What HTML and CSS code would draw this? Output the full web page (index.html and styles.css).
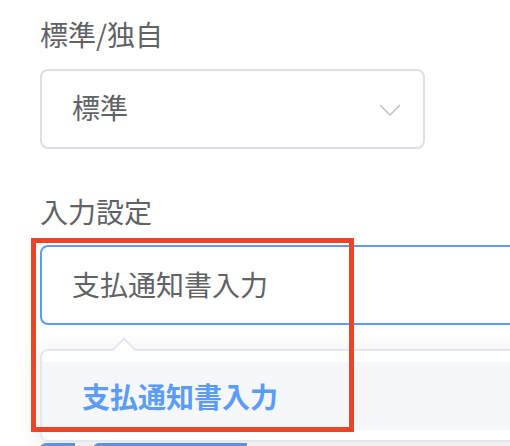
FILE: index.html
```html
<!DOCTYPE html>
<html lang="ja">
<head>
<meta charset="UTF-8">
<title>入力設定</title>
<link rel="stylesheet" href="styles.css">
</head>
<body>
	<div class="form">
		<div class="form-item">
			<label class="form-label">標準/独自</label>
			<div class="select">
				<span class="select-value">標準</span>
				<svg class="select-arrow" width="22" height="12" viewBox="0 0 22 12"><path d="M1 1 L11 11 L21 1" fill="none" stroke="#c0c4cc" stroke-width="1.6"/></svg>
			</div>
		</div>
		<div class="form-item">
			<label class="form-label">入力設定</label>
			<div class="input is-focus">支払通知書入力</div>
		</div>
		<div class="form-item next">
			<span class="btn"></span>
			<span class="btn wide"></span>
		</div>

		<!-- ドロップダウン -->
		<div class="dropdown">
			<ul>
				<li class="option hover">支払通知書入力</li>
			</ul>
		</div>

		<!-- 注目枠 -->
		<div class="mark"></div>
	</div>
</body>
</html>
```
FILE: styles.css
```css
*{margin:0;padding:0;box-sizing:border-box;list-style:none;}
body{
	width:510px;
	height:446px;
	overflow:hidden;
	background:#fff;
	font-family:"Noto Sans CJK JP","Noto Sans",sans-serif;
	color:#606266;
}
.form{
	position:relative;
	padding:14px 0 0 40px;
}
.form-label{
	display:block;
	font-size:28px;
	line-height:40px;
	margin-bottom:15px;
}
.form-item+.form-item{margin-top:42px;}
.form-item+.form-item .form-label{margin-bottom:14px;}
.select{
	width:385px;
	height:80px;
	border:2px solid #dcdfe6;
	border-radius:8px;
	display:flex;
	align-items:center;
	justify-content:space-between;
	padding:0 22px 4px 30px;
	font-size:28px;
}
.select-arrow{margin-top:6px;}
.input{
	width:640px;
	height:80px;
	border:2px solid #dcdfe6;
	border-radius:8px;
	padding:0 30px;
	font-size:28px;
	line-height:74px;
}
.input.is-focus{border-color:#5a9cf8;}
.form-item.next{
	margin-top:118px;
	display:flex;
	gap:18px;
}
.btn{
	width:35px;
	height:40px;
	background:#5a9cf8;
	border-radius:6px 0 0 0;
}
.btn.wide{width:154px;}
.dropdown{
	position:absolute;
	left:40px;
	top:349px;
	width:640px;
	background:#fff;
	border:2px solid #e4e7ed;
	border-radius:8px;
	box-shadow:0 4px 24px rgba(0,0,0,.1);
	padding:11px 0 10px;
}
.dropdown::before{
	content:"";
	position:absolute;
	left:73px;
	top:-10px;
	width:16px;
	height:16px;
	background:#fff;
	border-top:2px solid #e4e7ed;
	border-left:2px solid #e4e7ed;
	transform:rotate(45deg);
}
.option{
	height:68px;
	line-height:68px;
	padding:0 40px;
	font-size:28px;
}
.option.hover{
	background:#f5f7fa;
	color:#5a9cf8;
	font-weight:700;
}
.mark{
	position:absolute;
	left:31px;
	top:238px;
	width:323px;
	height:194px;
	border:5px solid #ea4429;
}
```
